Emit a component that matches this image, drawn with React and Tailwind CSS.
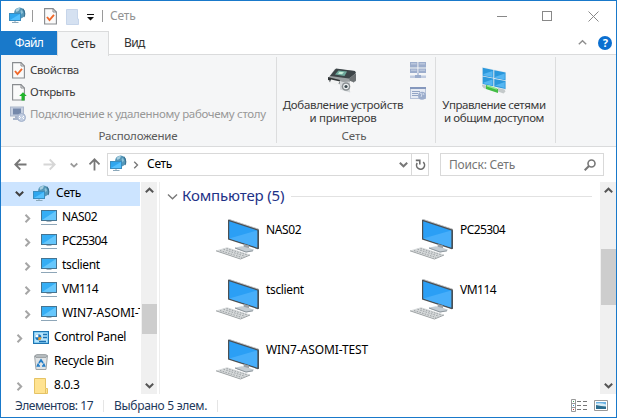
import React from "react";

function Chevron({ dir = "right", className = "", color = "#a6a6a6", w = 2, size = 9 }) {
  const d = {
    right: "M2.5 0.8 6.2 4.5 2.5 8.2",
    down: "M0.8 2.8 4.5 6.3 8.2 2.8",
    up: "M0.8 6.2 4.5 2.7 8.2 6.2",
  }[dir];
  return (
    <svg className={`shrink-0 ${className}`} width={size} height={size} viewBox="0 0 9 9" fill="none">
      <path d={d} stroke={color} strokeWidth={w} />
    </svg>
  );
}

function NetworkIcon({ className = "" }) {
  return (
    <svg className={`shrink-0 ${className}`} width="17" height="17" viewBox="0 0 17 17">
      <circle cx="10.6" cy="6" r="5.5" fill="#5597b8" />
      <path d="M6.500 3Q8.500 .8 11 .8L10 3.500 7.500 5Z" fill="#a9cfe0" />
      <path d="m11.500 4 1.500-1 1 2.500-1.500 2Z" fill="#8fc3da" />
      <path d="M13.800 1.800Q17 5.500 15 10" stroke="#3a708f" strokeWidth="1.100" fill="none" />
      <rect x=".5" y="6.500" width="11" height="7" fill="#2fa6ee" stroke="#3a8dbf" />
      <path d="M1 13 11 7v6Z" fill="#52bffd" />
      <path d="M6 14v1.500M3 15.500h6.500" stroke="#8ba8ba" />
    </svg>
  );
}

function CheckDoc() {
  return (
    <svg className="shrink-0" width="13" height="17" viewBox="0 0 13 17" fill="none">
      <path d="M.6.6H9L12.400 4v12H.6Z" fill="#fafafa" stroke="#888b8f" strokeWidth="1.100" />
      <path d="M9 .6V4h3.400" stroke="#888b8f" />
      <path d="m3 9 2.500 3L10 6.800" stroke="#f0682a" strokeWidth="1.900" />
    </svg>
  );
}

function OpenDoc() {
  return (
    <svg className="shrink-0" width="15" height="17" viewBox="0 0 15 17" fill="none">
      <path d="M.6.6H9L12.400 4v12H.6Z" fill="#fafafa" stroke="#888b8f" strokeWidth="1.100" />
      <path d="M9 .6V4h3.400" stroke="#888b8f" />
      <path d="M11 8.200 14.800 12h-2.300v4.500h-3V12H7.200Z" fill="#20b52b" />
    </svg>
  );
}

function RemoteIcon() {
  return (
    <svg className="shrink-0" width="16" height="16" viewBox="0 0 16 16" fill="none">
      <rect x=".5" y="1" width="13" height="9" fill="#c5cfe0" stroke="#a9b5ca" />
      <rect x="3" y="2.500" width="8" height="6" fill="#7488aa" />
      <path d="M3 13h6M6 10v3" stroke="#a9b5ca" strokeWidth="2" />
      <circle cx="11.500" cy="11.500" r="4" fill="#c2cee2" stroke="#a1b0ca" />
      <path d="m9 10 1.500 1.500L9 13M14 10l-1.500 1.500L14 13" stroke="#fff" />
    </svg>
  );
}

function PrinterIcon() {
  return (
    <svg className="shrink-0" width="30" height="25" viewBox="0 0 30 25">
      <path d="m7 1 20 2 1 10-8 5L1 14V9Z" fill="#9ca1a3" />
      <path d="m8 .5 19 2.500 1 2-7 5.500L2 8Z" fill="#3d4548" />
      <path d="m10.500 2.500 8.500 1-2.500 4.500L7 6.500Z" fill="#6fa99c" />
      <path d="m11.500 3.800 4.500.5-2 2-4-.5Z" fill="#c5edd8" />
      <path d="m0 9 12 3-.5 3L0 12Z" fill="#303536" />
      <path d="m3 11.500 9 2-3 4-7-2Z" fill="#f2f3f3" />
      <path d="m21 10.500 7-5v7l-5 3Z" fill="#6c7173" />
      <path d="m12 13 3 1 8-.5 1 9-2 2-10-3Z" fill="#d4d8da" />
      <path d="m22 13 3 1v9l-3 1Z" fill="#f7f7f7" />
      <circle cx="18" cy="18.500" r="4.300" fill="#8a9093" />
      <circle cx="18" cy="18.500" r="2.800" fill="#eef2f3" />
      <circle cx="18" cy="18.500" r="1.600" fill="#3c4a50" />
    </svg>
  );
}

function NetworkComputers() {
  return (
    <svg width="16" height="16" viewBox="0 0 16 16">
      <path d="M0 0h7.400v5.500H0ZM8.400 0H16v5.500H8.400ZM0 6.500h7.400V11H0ZM8.400 6.500H16V11H8.400Z" fill="#9cadcc" />
      <path d="M1 1h5.500v1.500H1ZM9.500 1H15v1.500H9.500ZM1 7.500h5.500V9H1ZM9.500 7.500H15V9H9.500Z" fill="#b9c6dc" />
      <path d="M7 11h2v2H7ZM0 13.500h16V16H0Z" fill="#c0cbe0" />
      <path d="M5 13h6v3H5Z" fill="#9cadcc" />
    </svg>
  );
}

function WebPageIcon() {
  return (
    <svg width="16" height="13" viewBox="0 0 16 13" fill="none">
      <rect x=".5" y=".5" width="15" height="11" fill="#e6ebf4" stroke="#b6c2d8" />
      <path d="M0 1h16" stroke="#8598bd" strokeWidth="2" />
      <path d="M2 4.500h8M2 6.500h6M2 8.500h6" stroke="#93a5c5" />
      <circle cx="12" cy="8.700" r="4" fill="#9cadcc" />
      <path d="m10 6 2 1-1 3M13 6l1 2" stroke="#d2dcec" />
    </svg>
  );
}

function SharingIcon() {
  return (
    <svg className="shrink-0" width="24" height="27" viewBox="0 0 24 27">
      <path d="M0 0 24 5v18L0 17Z" fill="#dfe8ef" />
      <path d="m.7.8 10.600 2.200v7.700L.7 8.700ZM12.300 3.300 23.500 5.500v7.700l-11.200-2.200ZM.7 9.500l10.600 2v7.700L.7 17ZM12.300 12 23.500 14v8l-11.200-2.500Z" fill="#2b98dc" />
      <path d="m1.500 7 9-3v6L1.500 8.200ZM13 10l9.700-3.500v6L13 10.700ZM1.500 15.500l9-3v6l-9-2ZM13 18.500l9.700-3.500v6Z" fill="#55b6f2" />
      <path d="m0 17.500 4 1v3.500l-2.500-1L0 19ZM16 21l6.500 1.500 1 2-2 2-5.500-2Z" fill="#c4c9ca" />
      <path d="m4 18 12 4v4L4 22Z" fill="#43bd45" />
      <path d="m5 18.800 10 3.200" stroke="#94e88d" strokeWidth="1.500" />
    </svg>
  );
}

function SmallPC() {
  return (
    <svg className="shrink-0" width="16" height="16" viewBox="0 0 16 16">
      <rect x=".5" y=".5" width="15" height="10" fill="#35aef5" stroke="#467491" />
      <path d="M1 10 15 1v9Z" fill="#67c7fc" />
      <path d="M5.500 11.500h5" stroke="#a7b7c3" />
      <path d="M0 14.500h16" stroke="#8ea6b8" />
    </svg>
  );
}

function BigPC() {
  return (
    <svg className="shrink-0" width="44" height="43" viewBox="0 0 44 43">
      <path d="m12 1 1-.7 29.500 9.700.5 1.200v18.500l-1.200.5L12 20.500Z" fill="#4b5054" />
      <path d="m12.200 1 .5-.7 29.800 9.800" stroke="#c9ccce" strokeWidth=".8" fill="none" />
      <path d="m13.200 2.200 28 9.300v17l-28-9Z" fill="#2b9ff5" />
      <path d="m13.200 19.500 28-8v17Z" fill="#47aefa" />
      <path d="m28 25 5 1.500v3l3 .8-1 1.700-8-2.200Z" fill="#9ba2a8" />
      <path d="m19 28.500 7-1.200 12 3.200-1 1.500-7 1.500-11-4Z" fill="#c5cdd3" />
      <path d="m19 29 11 4 7-1.200" stroke="#8d969c" fill="none" />
      <path d="m0 31.500 11-3.300 23 7.300-9 4Z" fill="#d6d9da" />
      <path d="m0 31.800 24.500 8.200 9.500-4" stroke="#9ba0a2" strokeWidth="1" fill="none" />
      <path d="m4 31.500 22 7M7.500 30.300l21.500 7M10.500 29.500l21 6.500" stroke="#969c9f" strokeWidth=".9" strokeDasharray="1.600 1.200" />
    </svg>
  );
}

function ControlPanelIcon() {
  return (
    <svg className="shrink-0" width="16" height="13" viewBox="0 0 16 13">
      <rect x=".5" y=".5" width="15" height="12" fill="#55b8ee" stroke="#2076b2" />
      <rect x="1.500" y="1.500" width="13" height="10" fill="#b9e4fa" />
      <circle cx="5.300" cy="6.200" r="3" fill="#1877c2" />
      <path d="M5.300 6.200V3.200a3 3 0 0 0-3 3Z" fill="#fff" />
      <path d="M5.300 6.200h3a3 3 0 0 1-3 3Z" fill="#f59a23" />
      <path d="M10 3.500h4M10 6.500h4M6 10.500h7" stroke="#1b70b2" strokeWidth="1.300" />
    </svg>
  );
}

function BinIcon() {
  return (
    <svg className="shrink-0" width="14" height="16" viewBox="0 0 14 16">
      <path d="m.6 2 1.400 13.500h10L13.400 2Z" fill="#dfe3e5" stroke="#9da3a6" />
      <path d="m1 1.500 2-1h8.500l2 1-1.500 2H2Z" fill="#b4babd" stroke="#8b9194" strokeWidth=".7" />
      <path d="m5 9 2-3 2 3M4.500 9.500l-1 2.500H6M9.500 9.500l1 2.500H8" stroke="#207cc7" strokeWidth="1.700" fill="none" />
    </svg>
  );
}

function FolderIcon() {
  return (
    <svg className="shrink-0" width="14" height="16" viewBox="0 0 14 16">
      <path d="M.5.5h11v10h2v5H.5Z" fill="#ffe391" stroke="#e5c365" />
      <path d="M11.500 11v4" stroke="#e5c365" />
    </svg>
  );
}

function Arrow({ dir, color, className = "" }) {
  const rot = { left: "", right: "rotate-180", up: "rotate-90" }[dir];
  return (
    <svg className={`shrink-0 ${rot} ${className}`} width="13" height="13" viewBox="0 0 13 13" fill="none">
      <path d="M12.500 6.500H1.500M6.300 1.500l-5 5 5 5" stroke={color} strokeWidth="1.800" />
    </svg>
  );
}

function TitleBar() {
  return (
    <div className="flex h-[30px] shrink-0 items-center pl-2">
      <NetworkIcon className="-mt-px" />
      <div className="ml-1.5 h-3 w-px bg-[#9a9a9a]" />
      <div className="ml-[11px] mt-px"><CheckDoc /></div>
      <svg className="ml-[9px] mt-px" width="13" height="16" viewBox="0 0 13 16">
        <path d="M.5.5h11v9.500h1v5.500H.5Z" fill="#d5e1f1" stroke="#c6d5ea" />
      </svg>
      <svg className="ml-2 mt-0.5" width="7" height="7" viewBox="0 0 7 7">
        <path d="M0 0h7v1H0ZM0 3h7L3.500 6.500Z" fill="#111" />
      </svg>
      <div className="ml-2 h-3 w-px bg-[#9a9a9a]" />
      <span className="ml-[7px] tracking-[-0.2px] text-[#929292]">Сеть</span>
      <div className="ml-auto flex items-center">
        <div className="mt-px h-px w-2.5 bg-[#888]" />
        <div className="ml-[35px] size-2.5 border border-[#888]" />
        <svg className="ml-9 mr-[17px]" width="11" height="11" viewBox="0 0 11 11">
          <path d="m.5.5 10 10M10.500.5l-10 10" stroke="#888" />
        </svg>
      </div>
    </div>
  );
}

function Tabs() {
  return (
    <div className="flex h-6 shrink-0">
      <div className="flex w-14 items-center justify-center bg-[#1979ca] tracking-[-0.6px] text-white">Файл</div>
      <div className="relative z-10 -mb-px flex w-[52px] items-center justify-center border-x border-t border-[#dadbdc] bg-[#f5f6f7] pb-px tracking-[-0.3px] text-[#333]">Сеть</div>
      <div className="flex grow items-center border-b border-[#dadbdc] pl-[15px] tracking-[-0.6px] text-[#333]">
        Вид
        <Chevron dir="up" w={1.4} color="#8d8d8d" className="ml-auto" />
        <div className="ml-[11px] mr-1 flex size-3.5 items-center justify-center rounded-full bg-[#0b6fd0] text-[11px] font-bold text-white">?</div>
      </div>
    </div>
  );
}

function Ribbon() {
  return (
    <div className="flex h-[92px] shrink-0 whitespace-nowrap border-b border-[#dadbdc] bg-[#f5f6f7] pb-[3px] pt-[2px] text-[11.5px] tracking-[-0.35px] text-[#3b3b3b]">
      <div className="flex w-[276px] flex-col border-r border-[#dcddde] pl-[9px] pt-[2px]">
        <div className="flex h-[22px] shrink-0 items-center gap-[5px] pl-0.5"><CheckDoc /><span>Свойства</span></div>
        <div className="flex h-[22px] shrink-0 items-center gap-[3px] pl-0.5"><OpenDoc /><span>Открыть</span></div>
        <div className="flex h-[22px] shrink-0 items-center gap-1 text-[#989898]"><RemoteIcon /><span className="tracking-[-0.32px]">Подключение к удаленному рабочему столу</span></div>
        <div className="mt-[4px] pr-2.5 text-center leading-[14px] tracking-[-0.2px] text-[#5a5a5a]">Расположение</div>
      </div>
      <div className="flex w-[159px] flex-col border-r border-[#dcddde]">
        <div className="flex h-[72px] shrink-0 pl-[5px]">
          <div className="flex w-[122px] flex-col items-center pt-[11px]">
            <PrinterIcon />
            <div className="mt-[5px] text-center leading-[13px] tracking-[-0.3px]">
              <div>Добавление устройств</div>
              <div>и принтеров</div>
            </div>
          </div>
          <div className="flex flex-col gap-[9px] pl-[6px] pt-[5px]"><NetworkComputers /><WebPageIcon /></div>
        </div>
        <div className="pr-1 text-center leading-[14px] tracking-[-0.1px] text-[#5a5a5a]">Сеть</div>
      </div>
      <div className="flex w-[120px] flex-col items-center border-r border-[#dcddde] pr-[3px] pt-2.5">
        <SharingIcon />
        <div className="mt-1 text-center leading-[13px]">
          <div className="tracking-[-0.4px]">Управление сетями</div>
          <div className="tracking-[-0.4px]">и общим доступом</div>
        </div>
      </div>
    </div>
  );
}

function AddressBar() {
  return (
    <div className="flex h-[35px] shrink-0 items-center pl-[13px] pr-3">
      <Arrow dir="left" color="#777" />
      <Arrow dir="right" color="#d6d6d6" className="ml-4" />
      <Chevron dir="down" size={8} color="#999" className="ml-[14px]" />
      <Arrow dir="up" color="#777" className="ml-[10px]" />
      <div className="ml-[6px] flex h-[23px] w-[322px] items-center border border-[#d9d9d9] pl-0.5">
        <NetworkIcon className="-mt-0.5" />
        <Chevron color="#777" w={1.5} size={8} className="ml-[5px]" />
        <span className="-mt-px ml-[7px] tracking-[-0.3px] text-black">Сеть</span>
        <Chevron dir="down" color="#777" className="ml-auto mr-[3px]" />
        <div className="flex h-full w-[17px] items-center justify-center border-l border-[#d9d9d9]">
          <svg width="11" height="12" viewBox="0 0 11 12" fill="none">
            <path d="M2.200 4A4 4 0 1 0 8.200 3.200M.8 1.400h4v4" stroke="#6d6d6d" strokeWidth="1.600" />
          </svg>
        </div>
      </div>
      <div className="ml-[11px] flex h-[23px] grow items-center border border-[#d9d9d9] pl-2 pr-[7px] tracking-[-0.2px] text-[#757575]">
        Поиск: Сеть
        <svg className="ml-auto" width="12" height="12" viewBox="0 0 12 12" fill="none">
          <circle cx="7.500" cy="4.500" r="3.500" stroke="#777" strokeWidth="1.600" />
          <path d="m5 7-4.300 4.300" stroke="#777" strokeWidth="2" />
        </svg>
      </div>
    </div>
  );
}

function Scrollbar({ before, thumb, className = "" }) {
  return (
    <div className={`flex shrink-0 flex-col items-center bg-[#f0f0f0] ${className}`}>
      <Chevron dir="up" color="#555" className="mt-1" />
      <div className={before} />
      <div className={`w-[15px] bg-[#cdcdcd] ${thumb}`} />
      <Chevron dir="down" color="#555" className="mb-1 mt-auto" />
    </div>
  );
}

const computers = [
  ["NAS02", "tracking-[-0.4px]"],
  ["PC25304", "tracking-[-0.6px]"],
  ["tsclient", "tracking-[-0.35px]"],
  ["VM114", "tracking-[-0.5px]"],
  ["WIN7-ASOMI-TEST", "tracking-[-0.1px]"],
];
const roots = [
  ["Control Panel", ControlPanelIcon, true],
  ["Recycle Bin", BinIcon, false],
  ["8.0.3", FolderIcon, true],
];

function NavPane() {
  return (
    <div className="w-[139px] shrink-0 overflow-hidden whitespace-nowrap text-black">
      <div className="flex h-6 items-center bg-[#cce4ff] pl-[14px]">
        <Chevron dir="down" color="#404040" className="-mt-0.5" />
        <NetworkIcon className="-mt-0.5 ml-[9px]" />
        <span className="-mt-0.5 ml-[6px] tracking-[-0.3px]">Сеть</span>
      </div>
      {computers.map(([n, tracking]) => (
        <div key={n} className="flex h-6 items-center pl-[22px]">
          <Chevron />
          <span className="ml-[9px]"><SmallPC /></span>
          <span className={`-mt-0.5 ml-[5px] ${tracking}`}>{n}</span>
        </div>
      ))}
      {roots.map(([n, Icon, expandable]) => (
        <div key={n} className="flex h-6 items-center pl-[14px]">
          <Chevron className={expandable ? "" : "invisible"} />
          <span className="-mt-px ml-[9px] flex w-4 justify-center"><Icon /></span>
          <span className="-mt-0.5 ml-[5px] tracking-[-0.3px]">{n}</span>
        </div>
      ))}
    </div>
  );
}

function Content() {
  return (
    <div className="min-w-0 grow pl-[7px] pt-[3px]">
      <div className="flex h-[22px] items-center pr-2">
        <Chevron dir="down" size={11} w={1.1} color="#777" />
        <span className="-mt-0.5 ml-1 text-[15px] tracking-[-0.15px] text-[#1e3287]">Компьютер (5)</span>
        <div className="ml-[7px] h-px grow bg-[#e2e2e2]" />
      </div>
      <div className="grid auto-rows-[60px] grid-cols-[194px_194px] pl-[49px] pt-3">
        {computers.map(([n, tracking]) => (
          <div key={n} className="flex">
            <BigPC />
            <span className={`ml-[6px] mt-[3px] whitespace-nowrap leading-4 text-black ${tracking}`}>{n}</span>
          </div>
        ))}
      </div>
    </div>
  );
}

function StatusBar() {
  return (
    <div className="flex h-[23px] shrink-0 items-center pl-[14px] pr-2 text-[#1e395b]">
      <span className="w-[88px] tracking-[-0.45px]">Элементов: 17</span>
      <div className="h-3 w-px bg-[#e5e5e5]" />
      <span className="ml-2.5 w-[103px] tracking-[-0.3px]">Выбрано 5 элем.</span>
      <div className="h-3 w-px bg-[#e5e5e5]" />
      <svg className="ml-auto" width="17" height="13" viewBox="0 0 17 13" fill="none">
        <path d="M.5.5h4v12h-4ZM.5 4.500h4M.5 8.500h4" stroke="#999" />
        <path d="M6 2.500h4M12 2.500h4M6 6.500h4M12 6.500h4M6 10.500h4M12 10.500h4" stroke="#777" />
        <path d="M2 2h1v1H2Z" fill="#46a35c" /><path d="M2 6h1v1H2Z" fill="#318bd0" /><path d="M2 10h1v1H2Z" fill="#c53030" />
      </svg>
      <svg className="ml-1.5" width="14" height="11" viewBox="0 0 14 11">
        <path d="M.5.5h13v10H.5Z" fill="#fff" stroke="#999" />
        <path d="M2 2h10v7H2Z" fill="#6ab2e4" />
        <path d="M2 3.500q5-1 10 1V7H2Z" fill="#d9edf6" />
        <path d="M2 5q5 1 10 1.500V9H2Z" fill="#2c6d8f" />
      </svg>
    </div>
  );
}

export default function App() {
  return (
    <div className="flex h-[418px] w-[617px] flex-col overflow-hidden border border-[#1979ca] bg-white font-['Noto_Sans','Open_Sans',sans-serif] text-[12px] leading-4">
      <TitleBar />
      <Tabs />
      <Ribbon />
      <AddressBar />
      <div className="flex h-[212px] shrink-0">
        <NavPane />
        <Scrollbar before="h-[109px] shrink-0" thumb="h-[30px]" className="ml-px w-4" />
        <div className="ml-0.5 w-px shrink-0 bg-[#ededed]" />
        <Content />
        <Scrollbar before="h-[54px] shrink-0" thumb="h-14" className="w-4" />
      </div>
      <StatusBar />
    </div>
  );
}
